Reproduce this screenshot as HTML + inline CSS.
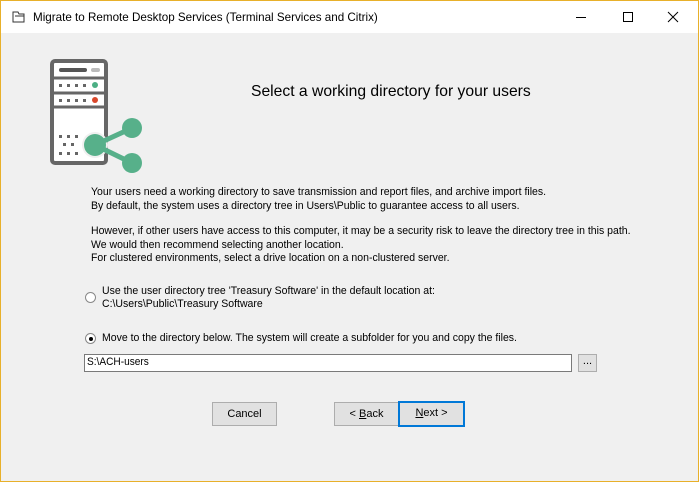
<!DOCTYPE html>
<html><head><style>
body{margin:0;width:699px;height:482px;overflow:hidden;background:#f0f0f0;font-family:"Liberation Sans",Arial,sans-serif;}
.win{position:absolute;left:0;top:0;width:697px;height:480px;border:1px solid #e8b02a;background:#f0f0f0;}
.title{position:absolute;left:0;top:0;width:697px;height:32px;background:#fff;}
.title .t{position:absolute;left:32px;top:9px;font-size:12px;color:#000;transform:scaleX(0.97);transform-origin:0 0;white-space:nowrap;}
.t2{position:absolute;font-size:11px;color:#000;white-space:nowrap;transform-origin:0 0;}
.btn{position:absolute;height:22px;border:1px solid #adadad;background:#e1e1e1;font-size:11px;text-align:center;line-height:22px;box-sizing:content-box;}
.radio{position:absolute;width:11px;height:11px;border-radius:50%;background:#fff;border:1px solid #888;box-sizing:border-box;}
</style></head><body>
<div class="win">
<div class="title">
<svg style="position:absolute;left:11px;top:10px" width="14" height="12" viewBox="0 0 14 12"><path d="M1 1h5l1 2h5v8H1z" fill="none" stroke="#333"/><path d="M3 5h9" stroke="#333"/></svg>
<div class="t">Migrate to Remote Desktop Services (Terminal Services and Citrix)</div>
<svg style="position:absolute;left:574px;top:10px" width="12" height="12"><path d="M1 6.5h10" stroke="#000"/></svg>
<svg style="position:absolute;left:621px;top:10px" width="12" height="12"><rect x="1.5" y="1.5" width="9" height="9" fill="none" stroke="#000"/></svg>
<svg style="position:absolute;left:666px;top:10px" width="12" height="12"><path d="M1 1l10 10M11 1L1 11" stroke="#000"/></svg>
</div>
<svg style="position:absolute;left:49px;top:58px" width="95" height="116" viewBox="0 0 95 116">
<rect x="2" y="2" width="54" height="102" rx="3" fill="#fff" stroke="#666" stroke-width="4"/>
<path d="M2 19h54M2 34h54M2 48h54" stroke="#666" stroke-width="3"/>
<rect x="9" y="9" width="28" height="4" rx="2" fill="#555"/><rect x="41" y="9" width="9" height="4" rx="2" fill="#bbb"/>
<g fill="#666"><rect x="9" y="25" width="3" height="3"/><rect x="17" y="25" width="3" height="3"/><rect x="25" y="25" width="3" height="3"/><rect x="33" y="25" width="3" height="3"/>
<rect x="9" y="40" width="3" height="3"/><rect x="17" y="40" width="3" height="3"/><rect x="25" y="40" width="3" height="3"/><rect x="33" y="40" width="3" height="3"/>
<rect x="9" y="76" width="3" height="3"/><rect x="17" y="76" width="3" height="3"/><rect x="25" y="76" width="3" height="3"/>
<rect x="13" y="84" width="3" height="3"/><rect x="21" y="84" width="3" height="3"/>
<rect x="9" y="93" width="3" height="3"/><rect x="17" y="93" width="3" height="3"/><rect x="25" y="93" width="3" height="3"/></g>
<circle cx="45" cy="26" r="3" fill="#4caf84"/><circle cx="45" cy="41" r="3" fill="#d9472b"/>
<circle cx="45" cy="86" r="13" fill="#f0f0f0"/>
<path d="M45 86L82 69M45 86L82 104" stroke="#57b08a" stroke-width="5"/>
<circle cx="45" cy="86" r="11" fill="#57b08a"/><circle cx="82" cy="69" r="10" fill="#57b08a"/><circle cx="82" cy="104" r="10" fill="#57b08a"/>
</svg>
<div class="t2" style="left:250px;top:82px;font-size:16px;transform:scaleX(0.98)">Select a working directory for your users</div>
<div class="t2" style="left:90px;top:184px;line-height:14px;transform:scaleX(0.955)">Your users need a working directory to save transmission and report files, and archive import files.<br>By default, the system uses a directory tree in Users\Public to guarantee access to all users.</div>
<div class="t2" style="left:90px;top:224px;line-height:13.5px;transform:scaleX(0.955)">However, if other users have access to this computer, it may be a security risk to leave the directory tree in this path.<br>We would then recommend selecting another location.<br>For clustered environments, select a drive location on a non-clustered server.</div>
<div class="radio" style="left:84px;top:291px"></div>
<div class="t2" style="left:101px;top:284px;line-height:13px;transform:scaleX(0.955)">Use the user directory tree 'Treasury Software' in the default location at:<br>C:\Users\Public\Treasury Software</div>
<div class="radio" style="left:84px;top:332px"><div style="position:absolute;left:3px;top:3px;width:4px;height:4px;border-radius:50%;background:#000"></div></div>
<div class="t2" style="left:101px;top:331px;transform:scaleX(0.955)">Move to the directory below. The system will create a subfolder for you and copy the files.</div>
<div style="position:absolute;left:83px;top:353px;width:486px;height:16px;background:#fff;border:1px solid #7a7a7a;"><span class="t2" style="left:2px;top:1px;transform:scaleX(0.92)">S:\ACH-users</span></div>
<div class="btn" style="left:577px;top:353px;width:17px;height:16px;line-height:12px;">...</div>
<div class="btn" style="left:211px;top:401px;width:63px;">Cancel</div>
<div class="btn" style="left:333px;top:401px;width:63px;">&lt; <u>B</u>ack</div>
<div class="btn" style="left:397px;top:400px;width:63px;border:2px solid #0078d7;line-height:21px;"><u>N</u>ext &gt;</div>
</div>
</body></html>
